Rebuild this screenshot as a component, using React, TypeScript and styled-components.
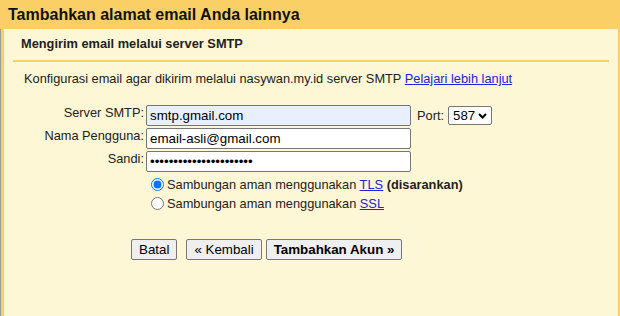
import styled, { createGlobalStyle } from "styled-components";

const GlobalStyle = createGlobalStyle`
  body {
    margin: 0;
    font-family: "Liberation Sans", Arial, sans-serif;
    color: #222;
  }
`;

const Frame = styled.div`
  display: flex;
  flex-direction: column;
  width: 620px;
  height: 316px;
  background-color: #f9cf66;
  overflow: hidden;
`;

const Header = styled.div`
  height: 29px;
  line-height: 29px;
  padding: 0 8px;
  font-size: 16px;
  font-weight: bold;
  color: #111;
`;

const Body = styled.div`
  flex: 1;
  display: flex;
  border-left: 1px solid #9c9c9c;
  padding: 0 2px 0 3px;
`;

const Panel = styled.div`
  flex: 1;
  background-color: #fef7d6;
  padding-top: 7px;
  font-size: 12.8px;
`;

const SectionTitle = styled.div`
  margin: 0 0 8px 17px;
  font-weight: bold;
  line-height: 16px;
`;

const Divider = styled.div`
  height: 2px;
  margin: 0 9px;
  background-color: #f9cf66;
`;

const Description = styled.p`
  margin: 9px 0 0 20px;
  line-height: 15px;
`;

const Link = styled.a`
  color: #2222dd;
  text-decoration: underline;
  cursor: pointer;
`;

const FormGrid = styled.div`
  display: grid;
  grid-template-columns: 140px auto;
  column-gap: 2px;
  row-gap: 2px;
  margin-top: 19px;
`;

const Label = styled.label`
  justify-self: end;
  line-height: 15px;
`;

const Field = styled.div`
  display: flex;
  align-items: center;
`;

const TextInput = styled.input<{ $filled?: boolean }>`
  box-sizing: border-box;
  width: 265px;
  height: 21px;
  padding: 1px 3px;
  border: 1px solid #767676;
  border-radius: 2px;
  background-color: ${(p) => (p.$filled ? "#e8f0fe" : "#ffffff")};
  font-family: inherit;
  font-size: 13.33px;
  color: #000;
  outline: none;
`;

const PortLabel = styled.span`
  margin: 0 4px 0 6px;
`;

const SelectWrap = styled.div`
  position: relative;
  display: flex;
`;

const Select = styled.select`
  appearance: none;
  box-sizing: border-box;
  height: 19px;
  width: 44px;
  padding: 0 14px 0 4px;
  border: 1px solid #767676;
  border-radius: 2px;
  background-color: #fff;
  font-family: inherit;
  font-size: 13.33px;
  color: #000;
  outline: none;
`;

const Chevron = styled.svg`
  position: absolute;
  right: 5px;
  top: 7px;
  pointer-events: none;
`;

const RadioGroup = styled.div`
  grid-column: 2;
  margin-top: 1px;
`;

const RadioRow = styled.label`
  display: flex;
  align-items: center;
  height: 19px;
`;

const Radio = styled.input`
  width: 13px;
  height: 13px;
  margin: 0 3px 0 5px;
`;

const Actions = styled.div`
  display: flex;
  margin-top: 26px;
  padding-left: 127px;
`;

const Button = styled.button<{ $bold?: boolean; $gap?: number }>`
  height: 21px;
  padding: 0 7px;
  margin-right: ${(p) => p.$gap ?? 0}px;
  border: 1px solid #767676;
  border-radius: 2px;
  background-color: #efefef;
  font-family: inherit;
  font-size: 13.33px;
  font-weight: ${(p) => (p.$bold ? "bold" : "normal")};
  color: #000;
  cursor: pointer;
`;

const App = () => {
  return (
    <>
      <GlobalStyle />
      <Frame>
        <Header>Tambahkan alamat email Anda lainnya</Header>
        <Body>
          <Panel>
            <SectionTitle>Mengirim email melalui server SMTP</SectionTitle>
            <Divider />
            <Description>
              Konfigurasi email agar dikirim melalui nasywan.my.id server SMTP{" "}
              <Link>Pelajari lebih lanjut</Link>
            </Description>
            <FormGrid>
              <Label>Server SMTP:</Label>
              <Field>
                <TextInput $filled defaultValue="smtp.gmail.com" />
                <PortLabel>Port:</PortLabel>
                <SelectWrap>
                  <Select defaultValue="587">
                    <option value="587">587</option>
                    <option value="465">465</option>
                  </Select>
                  <Chevron width="9" height="6" viewBox="0 0 9 6">
                    <path
                      d="M1 1 L4.5 4.5 L8 1"
                      fill="none"
                      stroke="#000"
                      strokeWidth="2"
                    />
                  </Chevron>
                </SelectWrap>
              </Field>
              <Label>Nama Pengguna:</Label>
              <Field>
                <TextInput defaultValue="email-asli@gmail.com" />
              </Field>
              <Label>Sandi:</Label>
              <Field>
                <TextInput type="password" defaultValue="abcdefghijklmnopqrstuv" />
              </Field>
              <RadioGroup>
                <RadioRow>
                  <Radio type="radio" name="security" defaultChecked />
                  <span>
                    Sambungan aman menggunakan <Link>TLS</Link>{" "}
                    <b>(disarankan)</b>
                  </span>
                </RadioRow>
                <RadioRow>
                  <Radio type="radio" name="security" />
                  <span>
                    Sambungan aman menggunakan <Link>SSL</Link>
                  </span>
                </RadioRow>
              </RadioGroup>
            </FormGrid>
            <Actions>
              <Button $gap={9}>Batal</Button>
              <Button $gap={4}>« Kembali</Button>
              <Button $bold>Tambahkan Akun »</Button>
            </Actions>
          </Panel>
        </Body>
      </Frame>
    </>
  );
};

export default App;
